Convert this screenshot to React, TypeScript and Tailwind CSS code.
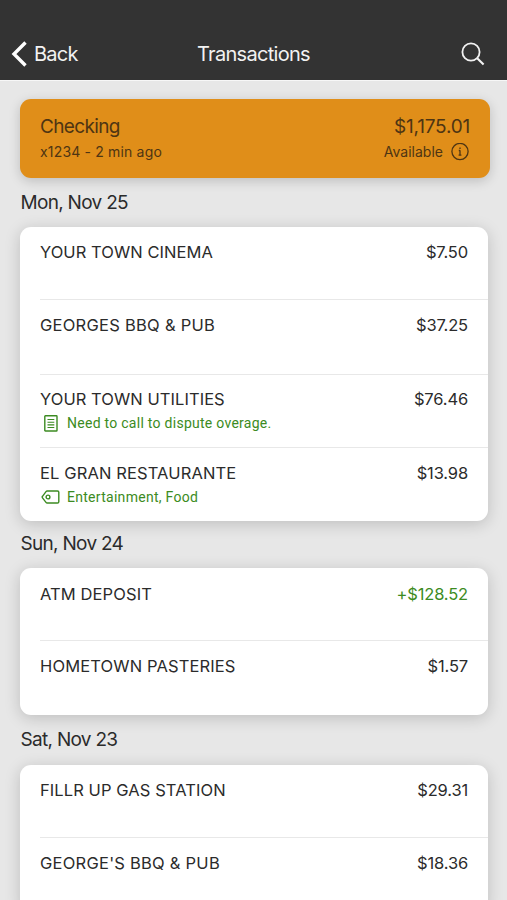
import type { ReactNode } from "react";

type Transaction = {
  name: string;
  amount: string;
  rowClass: string;
  tracking: string;
  credit?: boolean;
  detail?: ReactNode;
};

type Day = {
  label: string;
  labelClass: string;
  transactions: Transaction[];
};

const NoteIcon = () => (
  <svg className="ml-[4px] mr-[9px] h-[17px] w-[14px] shrink-0" viewBox="0 0 14 17" fill="none" stroke="currentColor">
    <rect x="0.8" y="0.8" width="12.2" height="15.2" rx="0.6" strokeWidth="1.4" />
    <path d="M3.5 4.5h6.8M3.5 7.2h6.8M3.5 9.9h6.8M3.5 12.5h6.8" strokeWidth="1.1" />
  </svg>
);

const TagIcon = () => (
  <svg className="ml-[1px] mr-[7px] h-[14px] w-[19px] shrink-0" viewBox="0 0 19 14" fill="none" stroke="currentColor">
    <path
      d="M6.2 1h10.3a1.3 1.3 0 0 1 1.3 1.3v9.4a1.3 1.3 0 0 1-1.3 1.3H6.2c-.5 0-.9-.2-1.2-.6L1.5 7.9a1.3 1.3 0 0 1 0-1.6L5 1.6c.3-.4.7-.6 1.2-.6z"
      strokeWidth="1.4"
    />
    <circle cx="7" cy="7" r="1.9" strokeWidth="1.4" />
  </svg>
);

const days: Day[] = [
  {
    label: "Mon, Nov 25",
    labelClass: "h-[49px] pt-[11px]",
    transactions: [
      { name: "YOUR TOWN CINEMA", amount: "$7.50", rowClass: "h-[72px] pt-[13px]", tracking: "tracking-[0.05px]" },
      { name: "GEORGES BBQ & PUB", amount: "$37.25", rowClass: "h-[75px] pt-[13px]", tracking: "tracking-[0.26px]" },
      {
        name: "YOUR TOWN UTILITIES",
        amount: "$76.46",
        rowClass: "h-[73px] pt-[12px]",
        tracking: "tracking-[0.06px]",
        detail: (
          <>
            <NoteIcon />
            <span className="tracking-[0.27px]">Need to call to dispute overage.</span>
          </>
        ),
      },
      {
        name: "EL GRAN RESTAURANTE",
        amount: "$13.98",
        rowClass: "h-[74px] pt-[13px]",
        tracking: "tracking-[0.12px]",
        detail: (
          <>
            <TagIcon />
            <span className="tracking-[0.28px]">Entertainment, Food</span>
          </>
        ),
      },
    ],
  },
  {
    label: "Sun, Nov 24",
    labelClass: "h-[47px] pt-[9px]",
    transactions: [
      { name: "ATM DEPOSIT", amount: "+$128.52", rowClass: "h-[72px] pt-[14px]", tracking: "tracking-[0.1px]", credit: true },
      { name: "HOMETOWN PASTERIES", amount: "$1.57", rowClass: "h-[75px] pt-[13px]", tracking: "tracking-[0.13px]" },
    ],
  },
  {
    label: "Sat, Nov 23",
    labelClass: "h-[50px] pt-[11px]",
    transactions: [
      { name: "FILLR UP GAS STATION", amount: "$29.31", rowClass: "h-[72px] pt-[13px]", tracking: "tracking-[0.08px]" },
      { name: "GEORGE'S BBQ & PUB", amount: "$18.36", rowClass: "h-[75px] pt-[13px]", tracking: "tracking-[0.24px]" },
    ],
  },
];

const Header = () => (
  <header className="grid h-[80px] shrink-0 grid-cols-3 items-center bg-[#333333] pt-[27px] text-[20px] text-[#f2f2f2] shadow-[0_1px_0_#f7f7f7]">
    <button className="flex items-center pl-[11px] tracking-[-0.75px]">
      <svg className="mr-[7px] h-[26px] w-[16px]" viewBox="0 0 16 26" fill="none" stroke="#ffffff" strokeWidth="3.4">
        <path d="M14.5 1.5 3 13l11.5 11.5" />
      </svg>
      Back
    </button>
    <h1 className="text-center tracking-[-0.7px]">Transactions</h1>
    <button className="flex justify-end pr-[22px]" aria-label="Search">
      <svg className="h-[24px] w-[24px]" viewBox="0 0 24 24" fill="none" stroke="currentColor" strokeWidth="1.8">
        <circle cx="10" cy="10" r="8.6" />
        <path d="m16.2 16.2 6.4 6.4" strokeWidth="2.1" />
      </svg>
    </button>
  </header>
);

const AccountCard = () => (
  <section className="ml-[20px] mr-[17px] mt-[19px] flex h-[79px] shrink-0 justify-between rounded-[11px] bg-[#e08e19] px-[20px] pt-[16px] text-[#4e3513] shadow-[0_3px_12px_rgba(0,0,0,0.18)]">
    <div>
      <h2 className="text-[19px] leading-[24px] tracking-[-0.65px]">Checking</h2>
      <p className="mt-[3px] text-[14px] leading-[20px] tracking-[0.17px]">x1234 - 2 min ago</p>
    </div>
    <div className="text-right">
      <p className="text-[19px] leading-[24px] tracking-[-0.2px]">$1,175.01</p>
      <p className="mt-[3px] flex items-center justify-end text-[14px] leading-[20px]">
        Available
        <svg className="ml-[8px] mr-[1px] h-[18px] w-[18px]" viewBox="0 0 18 18" fill="none" stroke="currentColor">
          <circle cx="9" cy="8.5" r="8.1" strokeWidth="1.3" />
          <path d="M9 7.2v5.2M7.8 7.5H9M7.6 12.2h2.8M9 4.5v1.5" strokeWidth="1.3" />
        </svg>
      </p>
    </div>
  </section>
);

const TransactionRow = ({ item, divided }: { item: Transaction; divided: boolean }) => (
  <li className={`${item.rowClass} ml-[20px] pr-[20px] ${divided ? "border-t border-[#e8e8e8]" : ""}`}>
    <div className="flex justify-between text-[16.5px] leading-[24px]">
      <span className={`whitespace-nowrap ${item.tracking}`}>{item.name}</span>
      <span className={`tracking-[-0.15px] ${item.credit ? "text-[#3c8b22]" : ""}`}>{item.amount}</span>
    </div>
    {item.detail && (
      <div className="flex h-[24px] items-center font-['Roboto',sans-serif] text-[14px] text-[#3c8b22]">{item.detail}</div>
    )}
  </li>
);

const App = () => {
  return (
    <div className="flex h-[900px] w-[507px] flex-col overflow-hidden bg-[#e7e7e7] font-['Inter',sans-serif] text-[#2b2b2b]">
      <Header />
      <AccountCard />
      {days.map((day) => (
        <section key={day.label} className="ml-[20px] mr-[19px] shrink-0">
          <h2 className={`pl-[0.5px] text-[19px] leading-[28px] tracking-[-0.7px] ${day.labelClass}`}>{day.label}</h2>
          <ul className="rounded-[11px] bg-white shadow-[0_3px_16px_rgba(0,0,0,0.18)]">
            {day.transactions.map((item, index) => (
              <TransactionRow key={item.name} item={item} divided={index > 0} />
            ))}
          </ul>
        </section>
      ))}
    </div>
  );
};

export default App;
